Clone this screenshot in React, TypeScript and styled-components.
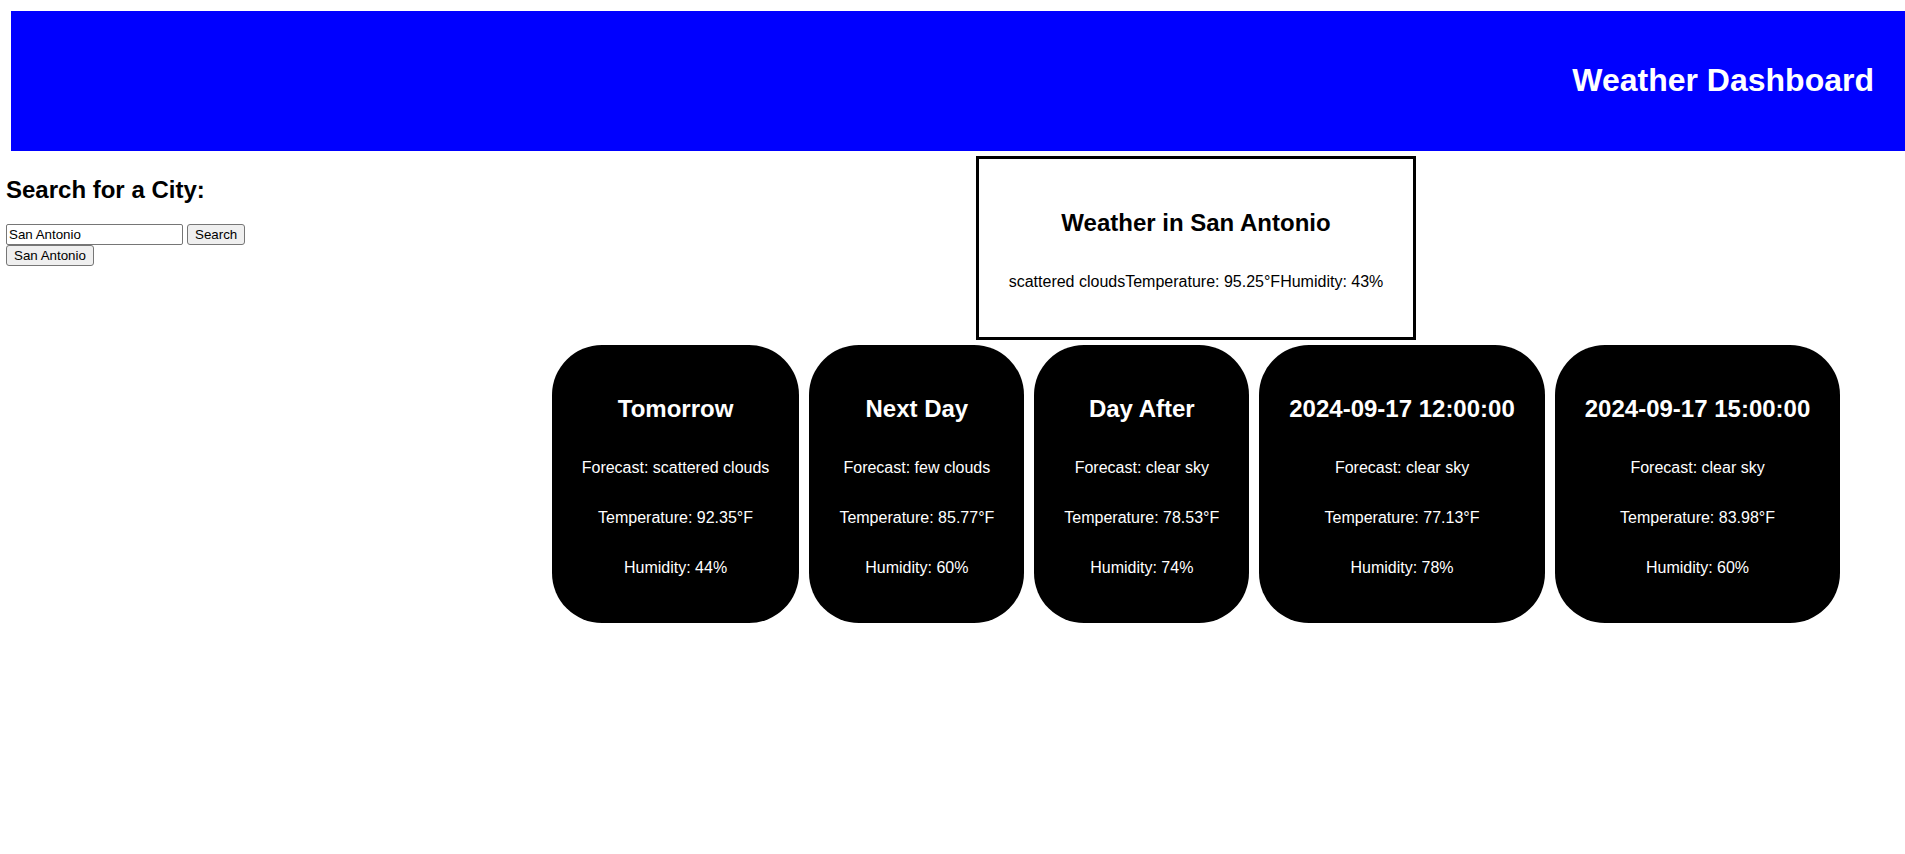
import styled, { createGlobalStyle } from "styled-components";

const GlobalStyle = createGlobalStyle`
    html, body {
        margin: 0;
        padding: 0;
        background: #fff;
        font-family: "Liberation Sans", Arial, sans-serif;
        color: #000;
    }
`;

const Header = styled.header`
    display: flex;
    align-items: center;
    justify-content: flex-end;
    box-sizing: border-box;
    width: calc(100% - 11px);
    height: 140px;
    margin: 11px 0 5px 11px;
    padding: 0 31px 2px 0;
    background-color: #0000ff;
    color: #fff;
`;

const Title = styled.h1`
    margin: 0;
    font-size: 32px;
    font-weight: bold;
`;

const Layout = styled.div`
    display: flex;
    align-items: flex-start;
`;

const Sidebar = styled.aside`
    box-sizing: border-box;
    width: 487px;
    padding-left: 6px;
`;

const SideTitle = styled.h2`
    margin: 19.92px 0;
    font-size: 24px;
`;

const SearchRow = styled.div`
    display: flex;
    gap: 4px;
`;

const Input = styled.input`
    box-sizing: border-box;
    width: 177px;
    height: 21px;
    padding: 1px 2px;
    border: 1px solid #767676;
    border-radius: 2px;
    font-family: "Liberation Sans", Arial, sans-serif;
    font-size: 13.333px;
    color: #000;
`;

const Button = styled.button`
    box-sizing: border-box;
    height: 21px;
    padding: 1px 7px;
    background-color: #efefef;
    border: 1px solid #767676;
    border-radius: 3px;
    font-family: "Liberation Sans", Arial, sans-serif;
    font-size: 13.333px;
    color: #000;
`;

const History = styled.div`
    display: flex;
`;

const Main = styled.main`
    flex: 1;
    display: flex;
    flex-direction: column;
    align-items: center;
`;

const CurrentBox = styled.section`
    display: flex;
    flex-direction: column;
    align-items: center;
    padding: 30px;
    margin-bottom: 5px;
    border: 3px solid #000;
    text-align: center;
`;

const BoxTitle = styled.h2`
    margin: 19.92px 0;
    font-size: 24px;
`;

const Text = styled.p`
    margin: 16px 0;
    font-size: 16px;
`;

const Forecast = styled.div`
    display: flex;
    gap: 10px;
`;

const Card = styled.div`
    display: flex;
    flex-direction: column;
    align-items: center;
    padding: 30px;
    background-color: #000;
    color: #fff;
    border-radius: 50px;
    text-align: center;
`;

const days = [
    { label: "Tomorrow", desc: "scattered clouds", temp: "92.35", hum: 44 },
    { label: "Next Day", desc: "few clouds", temp: "85.77", hum: 60 },
    { label: "Day After", desc: "clear sky", temp: "78.53", hum: 74 },
    { label: "2024-09-17 12:00:00", desc: "clear sky", temp: "77.13", hum: 78 },
    { label: "2024-09-17 15:00:00", desc: "clear sky", temp: "83.98", hum: 60 },
];

function App() {
    return (
        <>
            <GlobalStyle />
            <Header>
                <Title>Weather Dashboard</Title>
            </Header>
            <Layout>
                <Sidebar>
                    <SideTitle>Search for a City:</SideTitle>
                    <SearchRow>
                        <Input defaultValue="San Antonio" />
                        <Button>Search</Button>
                    </SearchRow>
                    <History>
                        <Button>San Antonio</Button>
                    </History>
                </Sidebar>
                <Main>
                    <CurrentBox>
                        <BoxTitle>Weather in San Antonio</BoxTitle>
                        <Text>
                            <span>scattered clouds</span>
                            <span>Temperature: 95.25°F</span>
                            <span>Humidity: 43%</span>
                        </Text>
                    </CurrentBox>
                    <Forecast>
                        {days.map((d) => (
                            <Card key={d.label}>
                                <BoxTitle>{d.label}</BoxTitle>
                                <Text>Forecast: {d.desc}</Text>
                                <Text>Temperature: {d.temp}°F</Text>
                                <Text>Humidity: {d.hum}%</Text>
                            </Card>
                        ))}
                    </Forecast>
                </Main>
            </Layout>
        </>
    );
}

export default App;
